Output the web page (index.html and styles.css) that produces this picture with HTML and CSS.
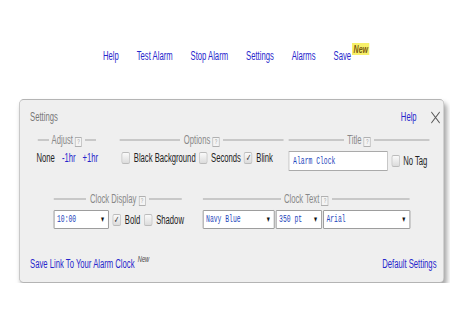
FILE: index.html
```html
<!DOCTYPE html>
<html lang="en">
<head>
  <meta charset="UTF-8" />
  <title>Alarm Clock – Settings</title>
  <link rel="stylesheet" href="styles.css">
</head>
<body>
  <div class="page">
    <!-- TOP MENU -->
    <nav class="menu">
      <a href="#">Help</a>
      <a href="#">Test Alarm</a>
      <a href="#">Stop Alarm</a>
      <a href="#">Settings</a>
      <a href="#">Alarms</a>
      <a href="#">Save<span class="new-badge">New</span></a>
    </nav>

    <!-- SETTINGS PANEL -->
    <div class="panel">
      <div class="panel-head">
        <span class="panel-title">Settings</span>
        <a href="#" class="panel-help">Help</a>
        <svg class="close" width="15" height="13" viewBox="0 0 15 13">
          <path d="M1 1 L14 12 M14 1 L1 12" stroke="#555" stroke-width="1.1" fill="none" vector-effect="non-scaling-stroke" />
        </svg>
      </div>

      <div class="row row-one">
        <fieldset class="grp grp-adjust">
          <legend>Adjust <span class="q">?</span></legend>
          <div class="grp-body">
            <span>None</span>
            <a href="#">-1hr</a>
            <a href="#">+1hr</a>
          </div>
        </fieldset>

        <fieldset class="grp grp-options">
          <legend>Options <span class="q">?</span></legend>
          <div class="grp-body">
            <label><span class="cb"></span>Black Background</label>
            <label><span class="cb"></span>Seconds</label>
            <label><span class="cb on">✓</span>Blink</label>
          </div>
        </fieldset>

        <fieldset class="grp grp-title">
          <legend>Title <span class="q">?</span></legend>
          <div class="grp-body">
            <input type="text" class="txt" value="Alarm Clock">
            <label><span class="cb"></span>No Tag</label>
          </div>
        </fieldset>
      </div>

      <div class="row row-two">
        <fieldset class="grp grp-display">
          <legend>Clock Display <span class="q">?</span></legend>
          <div class="grp-body">
            <span class="sel sel-time"><select><option>10:00</option></select></span>
            <label><span class="cb on">✓</span>Bold</label>
            <label><span class="cb"></span>Shadow</label>
          </div>
        </fieldset>

        <fieldset class="grp grp-text">
          <legend>Clock Text <span class="q">?</span></legend>
          <div class="grp-body">
            <span class="sel sel-color"><select><option>Navy Blue</option></select></span>
            <span class="sel sel-size"><select><option>350 pt</option></select></span>
            <span class="sel sel-font"><select><option>Arial</option></select></span>
          </div>
        </fieldset>
      </div>

      <div class="panel-foot">
        <a href="#">Save Link To Your Alarm Clock<span class="new-plain">New</span></a>
        <a href="#">Default Settings</a>
      </div>
    </div>
  </div>
</body>
</html>
```

FILE: styles.css
```css
html, body { overflow: hidden; }
body { margin: 0; background: #fff; color: #222; font-family: "Liberation Sans", Arial, sans-serif; font-size: 12px; }
a { color: #2626cc; text-decoration: none; }

.page { width: 703px; transform: scaleX(0.64); transform-origin: 0 0; }

/* top menu */
.menu { display: flex; gap: 28px; padding: 48px 0 0 161px; height: 16px; line-height: 16px; }
.new-badge { display: inline-block; position: relative; top: -7px; background: #f7f06a; color: #7a5a10; font-style: italic; font-weight: bold; font-size: 11px; padding: 0 2px; margin-left: 2px; height: 12px; line-height: 12px; }

/* panel */
.panel { margin: 35px 0 0 30px; width: 664px; height: 184px; box-sizing: border-box; background: #efefef; border: 1px solid #b4b4b4; border-radius: 7px / 5px; box-shadow: 3px 4px 6px rgba(0,0,0,0.35); padding: 9px 11px 0 16px; }
.panel-head { display: flex; align-items: center; height: 16px; }
.panel-title { color: #777; flex: 1; }
.panel-help { margin-right: 22px; }
.close { margin-right: -6px; }

/* groups */
.row { display: flex; }
.row-one { margin-top: 8px; }
.row-two { margin-top: 21px; }
.grp { border: 0; border-top: 2px solid #c8c8c8; margin: 0; padding: 0; min-width: 0; }
.grp legend { margin: 0 auto; padding: 0 5px; color: #888; line-height: 14px; }
.grp-body { display: flex; align-items: center; gap: 5px; margin-top: 4px; white-space: nowrap; }
.grp-adjust { width: 91px; margin-left: 12px; }
.grp-adjust .grp-body { gap: 11px; margin-left: -2px; }
.grp-options { width: 256px; margin-left: 37px; }
.grp-title { width: 220px; margin-left: 8px; }
.grp-display { width: 200px; margin-left: 37px; }
.grp-text { width: 323px; margin-left: 33px; }
.grp-text .grp-body { gap: 2px; }

.q { display: inline-block; width: 9px; height: 8px; border: 1px solid #b0b0b0; background: #f4f4f4; color: #999; font-size: 7px; line-height: 8px; text-align: center; vertical-align: 0; }

label { display: inline-flex; align-items: center; gap: 6px; }
.grp-options .grp-body { margin-left: 3px; }
.grp-title .grp-body { gap: 6px; }
.grp-title label { gap: 5px; }
.cb { display: inline-block; width: 11px; height: 10px; border: 1px solid #bbb; border-radius: 3px / 2px; background: linear-gradient(#fafafa, #dcdcdc); color: #333; font-size: 10px; line-height: 10px; text-align: center; }

.txt { width: 155px; height: 20px; box-sizing: border-box; margin: 0; border: 1px solid #aaa; background: #fff; padding: 0 6px; font-family: "Liberation Mono", "Courier New", monospace; font-size: 10px; color: #2244bb; }

.sel { position: relative; display: inline-block; }
.sel select { appearance: none; -webkit-appearance: none; display: block; height: 19px; box-sizing: border-box; margin: 0; border: 1px solid #888; border-radius: 1px; background: #fff; padding: 0 4px; font-family: "Liberation Mono", "Courier New", monospace; font-size: 10px; color: #2244bb; }
.sel::after { content: "▼"; position: absolute; right: 6px; top: 5px; font-size: 8px; line-height: 9px; color: #111; pointer-events: none; }
.sel-time select { width: 86px; }
.sel-color select { width: 112px; }
.sel-size select { width: 72px; }
.sel-font select { width: 136px; }
.grp-display .grp-body { gap: 6px; }

.panel-foot { display: flex; justify-content: space-between; margin-top: 28px; }
.new-plain { position: relative; top: -6px; color: #444; font-style: italic; font-size: 9px; margin-left: 5px; }
```
